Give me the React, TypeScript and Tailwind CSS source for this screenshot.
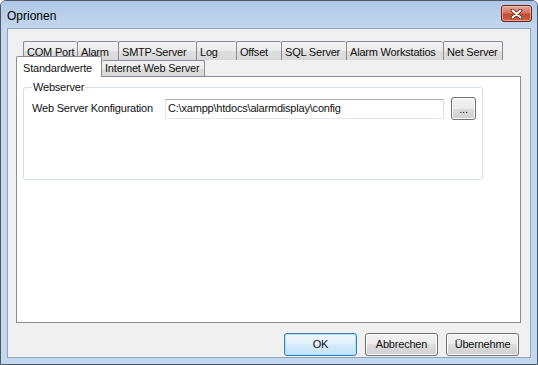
import React from 'react';

const upperTabs = [
  { label: 'COM Port', w: 'w-[54px]' },
  { label: 'Alarm', w: 'w-[41px]' },
  { label: 'SMTP-Server', w: 'w-[78px]' },
  { label: 'Log', w: 'w-[40px]' },
  { label: 'Offset', w: 'w-[45px]' },
  { label: 'SQL Server', w: 'w-[65px]' },
  { label: 'Alarm Workstatios', w: 'w-[97px]' },
  { label: 'Net Server', w: 'w-[60px] border-r' },
];

const tabBg = 'bg-[linear-gradient(#f3f3f3,#ebebeb_50%,#dedede_50%,#d8d8d8)]';
const btnBg = 'bg-[linear-gradient(#f2f2f2,#ebebeb_50%,#dddddd_50%,#cfcfcf)]';

const DialogButton = ({ label, primary }: { label: string; primary?: boolean }) => (
  <button
    className={`h-[23px] w-[73px] rounded-[3px] border text-[11px] ${
      primary
        ? 'border-[#3c7fb1] bg-[linear-gradient(#eef7fd,#e3f2fc_50%,#d3ebfa_50%,#c6e3f6)] shadow-[inset_0_0_0_1px_#a9e3fb]'
        : `border-[#707070] ${btnBg} shadow-[inset_0_0_0_1px_#fbfbfb]`
    }`}
  >
    {label}
  </button>
);

const App = () => {
  return (
    <div className="h-[365px] w-[538px] bg-white font-['Liberation_Sans',Arial,sans-serif] text-[11px] tracking-[-0.2px] text-[#111]">
      <div className="flex h-full flex-col rounded-t-[6px] border border-[#4e5966] bg-[#c3d7ee]">
        {/* Title bar */}
        <div className="flex h-[27px] items-start justify-between rounded-t-[5px] bg-[linear-gradient(#b0c8e6,#c3d7ee)] pl-[6px] pr-[5px]">
          <span className="mt-[6px] text-[12px] tracking-normal text-black">Oprionen</span>
          <div className="mt-[4px] flex h-[17px] w-[31px] items-center justify-center rounded-[3px] border border-[#6b2519] bg-[linear-gradient(#e9a597,#d27462_45%,#c24a33_55%,#c8644a)] shadow-[inset_0_0_0_1px_rgba(255,220,210,0.5)]">
            <svg width="13" height="10" viewBox="0 0 13 10">
              <path d="M2.5 1.5 L10.5 8.5 M10.5 1.5 L2.5 8.5" stroke="#5a2016" strokeWidth="3.6" strokeLinecap="round" />
              <path d="M2.5 1.5 L10.5 8.5 M10.5 1.5 L2.5 8.5" stroke="#ffffff" strokeWidth="2" strokeLinecap="round" />
            </svg>
          </div>
        </div>

        {/* Frame + client */}
        <div className="flex flex-1 px-[6px] pb-[6px]">
          <div className="flex flex-1 flex-col border border-[#8ea3bd] bg-[#f0f0f0]">
            <div className="px-[8px] pt-[12px]">
              {/* upper tab row */}
              <div className="ml-[7px] flex h-[19px]">
                {upperTabs.map((t) => (
                  <div
                    key={t.label}
                    className={`${t.w} ${tabBg} overflow-hidden whitespace-nowrap rounded-t-[2px] border-l border-t border-[#898c95] pl-[3px] pt-[2px]`}
                  >
                    {t.label}
                  </div>
                ))}
              </div>
              {/* lower tab row */}
              <div className="flex h-[16px] items-end">
                <div className="relative z-10 -mb-px flex h-[21px] w-[86px] items-start rounded-t-[2px] border-x border-t border-[#898c95] bg-white pl-[6px] pt-[3px]">
                  Standardwerte
                </div>
                <div className={`flex h-[16px] w-[103px] items-center whitespace-nowrap rounded-t-[2px] border-r border-t border-[#898c95] ${tabBg} pl-[3px]`}>
                  Internet Web Server
                </div>
              </div>
              {/* tab page */}
              <div className="h-[247px] w-[505px] border border-[#898c95] bg-white pt-[4px]">
                <fieldset className="ml-[6px] h-[99px] w-[460px] rounded-[3px] border border-[#d5dfe5] pl-[8px]">
                  <legend className="px-[1px] leading-[13px]">Webserver</legend>
                  <div className="mt-[3px] flex items-center">
                    <span className="w-[133px] shrink-0">Web Server Konfiguration</span>
                    <div className="flex h-[20px] w-[279px] items-center border border-b-[#e3e9ef] border-l-[#e2e3ea] border-r-[#dbdfe6] border-t-[#abadb3] bg-white pl-[2px]">
                      C:\xampp\htdocs\alarmdisplay\config
                    </div>
                    <button
                      className={`ml-[7px] flex h-[23px] w-[25px] items-end justify-center rounded-[3px] border border-[#707070] pb-[4px] leading-none ${btnBg} shadow-[inset_0_0_0_1px_#fbfbfb]`}
                    >
                      ...
                    </button>
                  </div>
                </fieldset>
              </div>
            </div>

            {/* dialog buttons */}
            <div className="mt-[10px] flex justify-end gap-[8px] pr-[11px]">
              <DialogButton label="OK" primary />
              <DialogButton label="Abbrechen" />
              <DialogButton label="Übernehme" />
            </div>
          </div>
        </div>
      </div>
    </div>
  );
};

export default App;
